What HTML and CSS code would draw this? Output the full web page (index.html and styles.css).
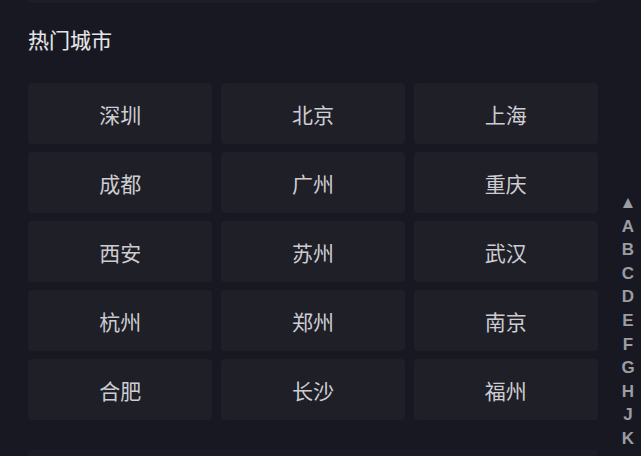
FILE: index.html
```html
<!DOCTYPE html>
<html lang="zh-CN">
<head>
<meta charset="utf-8">
<link rel="stylesheet" href="styles.css">
</head>
<body>
<div class="page">
  <div class="prev-card"></div>
  <section class="hot">
    <h2 class="hot-title">热门城市</h2>
    <div class="city-grid">
      <div class="city">深圳</div>
      <div class="city">北京</div>
      <div class="city">上海</div>
      <div class="city">成都</div>
      <div class="city">广州</div>
      <div class="city">重庆</div>
      <div class="city">西安</div>
      <div class="city">苏州</div>
      <div class="city">武汉</div>
      <div class="city">杭州</div>
      <div class="city">郑州</div>
      <div class="city">南京</div>
      <div class="city">合肥</div>
      <div class="city">长沙</div>
      <div class="city">福州</div>
    </div>
  </section>
  <div class="next-card"></div>
</div>
<nav class="index-bar">
  <span class="idx idx-top">▲</span>
  <span class="idx">A</span>
  <span class="idx">B</span>
  <span class="idx">C</span>
  <span class="idx">D</span>
  <span class="idx">E</span>
  <span class="idx">F</span>
  <span class="idx">G</span>
  <span class="idx">H</span>
  <span class="idx">J</span>
  <span class="idx">K</span>
</nav>
</body>
</html>
```

FILE: styles.css
```css
html, body {
  margin: 0;
  padding: 0;
  background: #171821;
  height: 100%;
  overflow: hidden;
}
body {
  font-family: "Noto Sans CJK SC", "Noto Sans", sans-serif;
  color: #d2d2d6;
}
.page {
  padding: 0 43px 0 28px;
}
.prev-card {
  height: 3px;
  background: #1c1d26;
  border-radius: 0 0 4px 4px;
}
.hot {
  padding-top: 21px;
}
.hot-title {
  margin: 0;
  font-size: 21px;
  line-height: 30px;
  font-weight: 400;
  color: #e6e6e8;
  -webkit-text-stroke: 0.1px #e6e6e8;
}
.city-grid {
  margin-top: 29px;
  display: grid;
  grid-template-columns: repeat(3, 1fr);
  gap: 8px 8.5px;
}
.city {
  height: 61px;
  background: #1f1f28;
  border-radius: 4px;
  display: flex;
  align-items: center;
  justify-content: center;
  font-size: 21px;
  color: #cdcdd1;
}
.next-card {
  margin-top: 30px;
  height: 40px;
  background: #1b1c25;
  border-radius: 4px 4px 0 0;
}
.index-bar {
  position: absolute;
  right: 5px;
  top: 191px;
  width: 16px;
  display: flex;
  flex-direction: column;
  align-items: center;
  font-family: "Liberation Sans", Arial, sans-serif;
  font-weight: bold;
  font-size: 17px;
  line-height: 23.6px;
  color: #9c9ca4;
}
.idx-top {
  font-size: 17px;
}
```
